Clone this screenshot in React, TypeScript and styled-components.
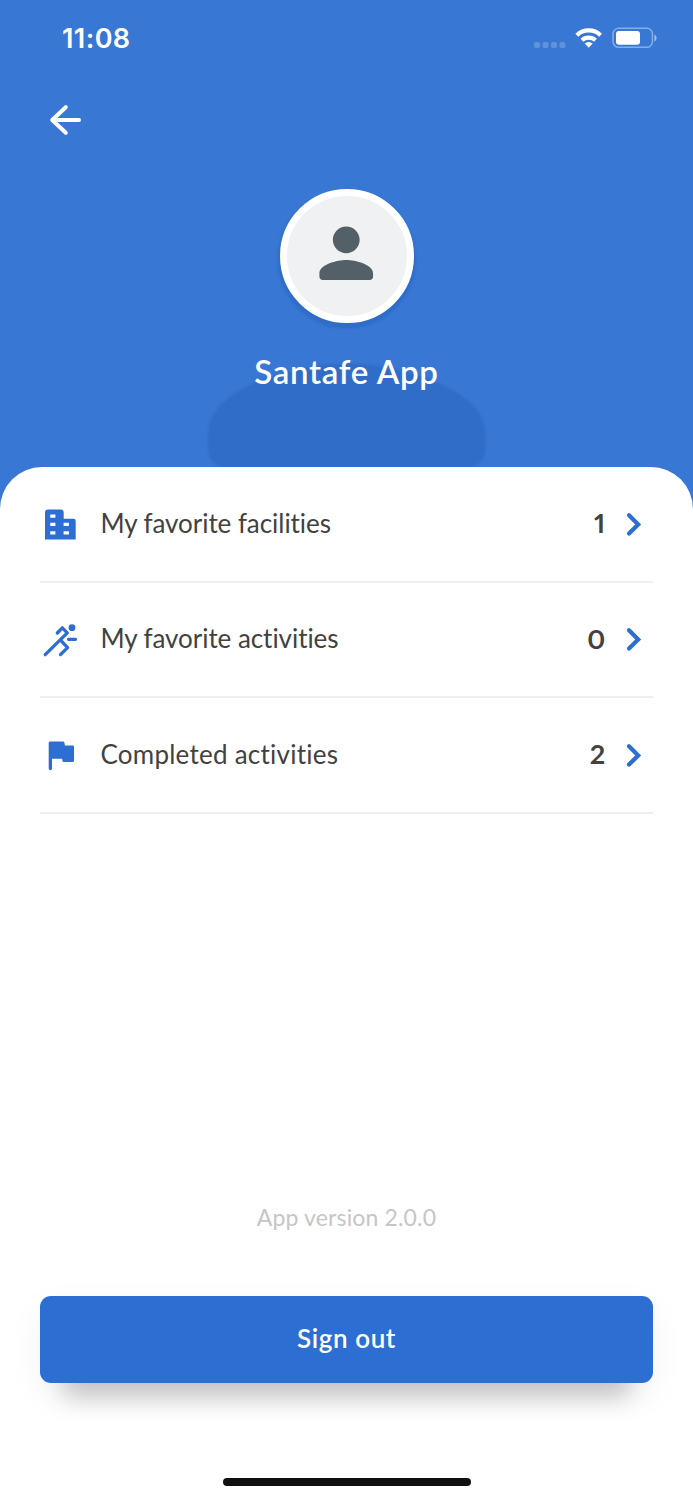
import React from "react";
import styled, { createGlobalStyle, ThemeProvider } from "styled-components";

const theme = {
  primary: "#2d6ed2",
  header: "#3877d4",
  shade: "#2f6dc8",
  text: "#424242",
  muted: "#c6c6c6",
  line: "#efefef",
};

const GlobalStyle = createGlobalStyle`
  * {
    box-sizing: border-box;
  }
  body {
    margin: 0;
    background: #fff;
    font-family: Lato, sans-serif;
  }
  svg {
    display: block;
    flex: none;
  }
`;

const PageWrapper = styled.div`
  display: flex;
  flex-direction: column;
  width: 693px;
  height: 1500px;
  overflow: hidden;
  background: #fff;
`;

const Header = styled.header`
  position: relative;
  height: 512px;
  flex: none;
  overflow: hidden;
  background: ${(p) => p.theme.header};
  color: #fff;
`;

const Silhouette = styled.svg`
  position: absolute;
  top: 121px;
  left: calc(50% - 207.75px);
  color: ${(p) => p.theme.shade};
  filter: blur(1px);
`;

const StatusBar = styled.div`
  display: flex;
  justify-content: space-between;
  height: 76px;
  padding: 0 35px 0 62px;
`;

const Time = styled.div`
  font-family: Inter, sans-serif;
  font-size: 27px;
  font-weight: 600;
  line-height: 78px;
  letter-spacing: 0.4px;
`;

const BackButton = styled.button`
  display: block;
  margin: 24px 0 0 46px;
  padding: 0;
  border: 0;
  background: none;
  color: #fff;
`;

const Profile = styled.div`
  position: relative;
  display: flex;
  flex-direction: column;
  align-items: center;
  margin-top: 49px;
`;

const Avatar = styled.div`
  display: flex;
  justify-content: center;
  width: 134px;
  height: 134px;
  padding-top: 17px;
  border: 7px solid #fff;
  border-radius: 50%;
  background: #f0f1f3;
  color: #546067;
`;

const Name = styled.h1`
  margin: 27px 0 0;
  font-size: 33px;
  font-weight: 600;
  line-height: 42px;
  letter-spacing: 0.7px;
`;

const Sheet = styled.main`
  position: relative;
  display: flex;
  flex: 1;
  flex-direction: column;
  margin-top: -45px;
  padding: 0 40.4px 14px;
  border-radius: 42px 42px 0 0;
  background: #fff;
`;

const Row = styled.div`
  display: flex;
  align-items: center;
  height: 115.5px;
  border-bottom: 2px solid ${(p) => p.theme.line};
  color: ${(p) => p.theme.text};
  font-size: 26px;
  svg {
    color: ${(p) => p.theme.primary};
  }
`;

const Label = styled.span<{ $spacing: number }>`
  flex: 1;
  margin-left: 20px;
  padding-bottom: 2px;
  letter-spacing: ${(p) => p.$spacing}px;
`;

const Count = styled.span`
  margin-right: 19.5px;
  padding-bottom: 2px;
  font-size: 27px;
  font-weight: 700;
  font-variant-numeric: proportional-nums;
`;

const Version = styled.p`
  margin: auto 0 0;
  color: ${(p) => p.theme.muted};
  font-size: 23px;
  line-height: 30px;
  letter-spacing: 0.15px;
  text-align: center;
`;

const SignOut = styled.button`
  height: 87px;
  margin-top: 64px;
  padding: 0 0 2px;
  flex: none;
  border: 0;
  border-radius: 11px;
  background: ${(p) => p.theme.primary};
  box-shadow:
    0 38px 24px -24px rgba(0, 0, 0, 0.21),
    0 12px 36px rgba(0, 0, 0, 0.05);
  color: #fff;
  font-family: inherit;
  font-size: 26px;
  font-weight: 600;
  letter-spacing: 0.6px;
`;

const HomeIndicator = styled.div`
  align-self: center;
  width: 248px;
  height: 8.5px;
  margin-top: 95px;
  border-radius: 5px;
  background: #101010;
`;

const personPath =
  "M12 12c2.21 0 4-1.79 4-4s-1.79-4-4-4-4 1.79-4 4 1.79 4 4 4zm0 2c-2.67 0-8 1.34-8 4v1c0 .55.45 1 1 1h14c.55 0 1-.45 1-1v-1c0-2.66-5.33-4-8-4z";

const StatusIcons = () => (
  <svg width="126" height="76" viewBox="532 0 126 76" fill="#fff">
    <g opacity="0.2">
      {[534, 542.5, 551, 559.5].map((x) => (
        <rect key={x} x={x} y="42" width="6" height="6" rx="2" />
      ))}
    </g>
    <g fill="none" stroke="#fff" strokeWidth="4.2">
      <path d="M576.8 35.2a17.3 17.3 0 0 1 23.8 0" />
      <path d="M581.9 40.2a10 10 0 0 1 13.6 0" />
    </g>
    <path d="M588.7 47.7l-4-4.1a5.9 5.9 0 0 1 8 0z" />
    <rect
      x="613"
      y="28.3"
      width="39.4"
      height="19"
      rx="5.6"
      fill="none"
      stroke="#fff"
      strokeOpacity="0.4"
      strokeWidth="1.5"
    />
    <rect x="616" y="31" width="24" height="13.8" rx="3" />
    <path d="M654.3 34.4c3 1.2 3 5.8 0 7z" opacity="0.5" />
  </svg>
);

const BackArrow = () => (
  <svg width="40" height="40" viewBox="0 0 40 40" fill="none">
    <path
      d="M19.8 7.2L6.2 20l13.6 12.8M6.2 20H33"
      stroke="currentColor"
      strokeWidth="4"
      strokeLinecap="round"
      strokeLinejoin="round"
    />
  </svg>
);

const BuildingIcon = () => (
  <svg width="40" height="40" viewBox="0 0 40 40" fill="currentColor">
    <path
      fillRule="evenodd"
      d="M5 35.5V8.5a3 3 0 0 1 3-3h12.7a3 3 0 0 1 3 3v6.3h9.6a2.4 2.4 0 0 1 2.4 2.4v18.3zM10.2 10.5v3.2h5.2v-3.2zM10.2 18.8v3.3h5.2v-3.3zM10.2 27.2v3.3h5.2v-3.3zM23.6 18.8v3.3h5.3v-3.3zM23.6 27.2v3.3h5.3v-3.3z"
    />
  </svg>
);

const RunnerIcon = () => (
  <svg width="40" height="40" viewBox="0 -1 40 40" fill="none">
    <circle cx="32" cy="7.7" r="3.4" fill="currentColor" />
    <path
      d="M17.3 13l5-5.2 5 5L5.2 34.7M21 20.6l6.6 7-7.1 7M28.5 19.3h7"
      stroke="currentColor"
      strokeWidth="3.3"
      strokeLinecap="round"
      strokeLinejoin="round"
    />
  </svg>
);

const FlagIcon = () => (
  <svg width="40" height="40" viewBox="0 0 40 40" fill="currentColor">
    <path d="M10 6.5h13a1.4 1.4 0 0 1 1.4 1.2l.5 2.8H32.7a1.3 1.3 0 0 1 1.3 1.3v14a1.3 1.3 0 0 1-1.3 1.3h-9a1.3 1.3 0 0 1-1.2-1l-.4-2.3H12v9.8a1.6 1.6 0 0 1-3.3 0V7.8A1.3 1.3 0 0 1 10 6.5z" />
  </svg>
);

const Chevron = () => (
  <svg width="28" height="40" viewBox="0 0 28 40" fill="none">
    <path
      d="M4 11.2l9.2 9.2-9.2 9.2"
      stroke="currentColor"
      strokeWidth="4.2"
      strokeLinecap="round"
    />
  </svg>
);

const rows = [
  { label: "My favorite facilities", count: 1, icon: <BuildingIcon />, spacing: -0.05 },
  { label: "My favorite activities", count: 0, icon: <RunnerIcon />, spacing: -0.05 },
  { label: "Completed activities", count: 2, icon: <FlagIcon />, spacing: 0.25 },
];

const App = () => {
  return (
    <ThemeProvider theme={theme}>
      <GlobalStyle />
      <PageWrapper>
        <Header>
          <Silhouette width="415.5" height="415.5" viewBox="0 0 24 24">
            <path d={personPath} fill="currentColor" />
          </Silhouette>
          <StatusBar>
            <Time>11:08</Time>
            <StatusIcons />
          </StatusBar>
          <BackButton aria-label="Back">
            <BackArrow />
          </BackButton>
          <Profile>
            <Avatar>
              <svg width="80.5" height="80.5" viewBox="0 0 24 24">
                <path d={personPath} fill="currentColor" />
              </svg>
            </Avatar>
            <Name>Santafe App</Name>
          </Profile>
        </Header>
        <Sheet>
          {rows.map((r) => (
            <Row key={r.label}>
              {r.icon}
              <Label $spacing={r.spacing}>{r.label}</Label>
              <Count>{r.count}</Count>
              <Chevron />
            </Row>
          ))}
          <Version>App version 2.0.0</Version>
          <SignOut>Sign out</SignOut>
          <HomeIndicator />
        </Sheet>
      </PageWrapper>
    </ThemeProvider>
  );
};

export default App;
